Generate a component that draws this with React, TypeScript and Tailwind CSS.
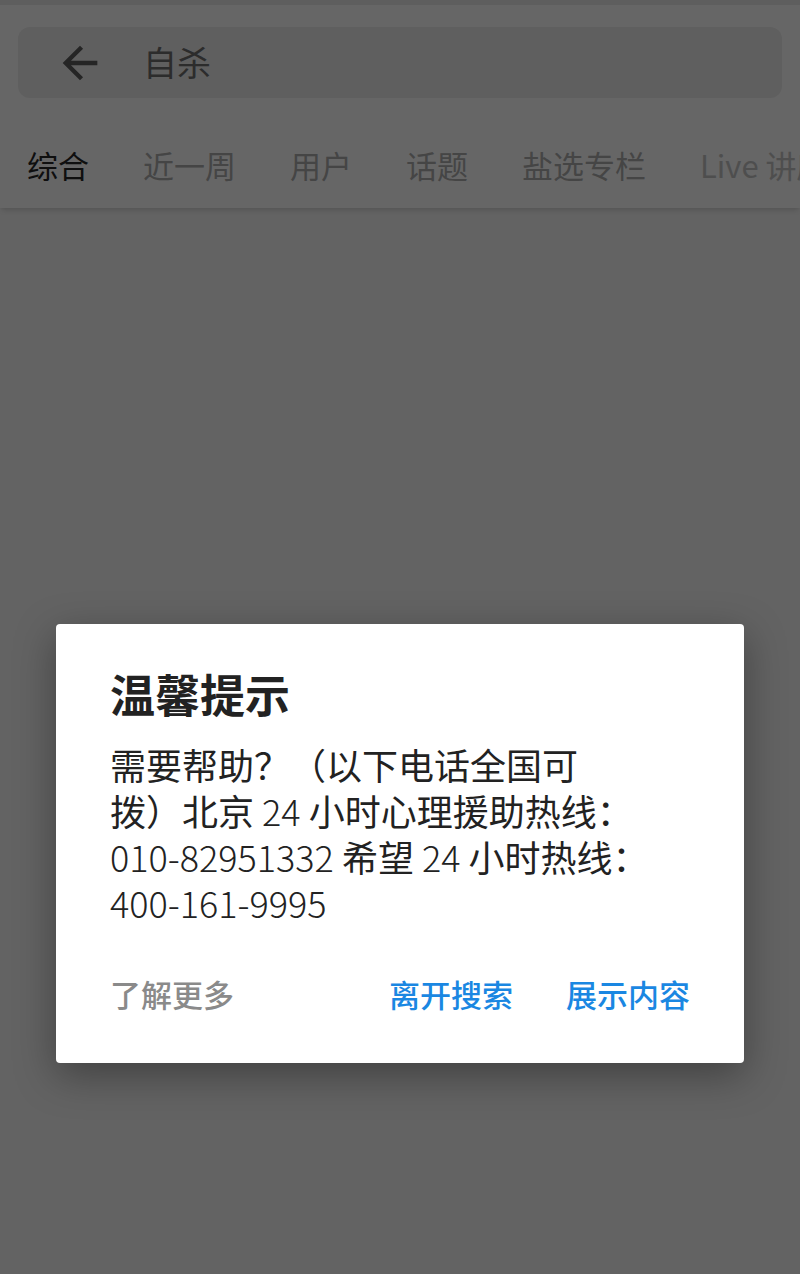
import React from "react"

const tabs = [
  { label: "综合", active: true },
  { label: "近一周" },
  { label: "用户" },
  { label: "话题" },
  { label: "盐选专栏" },
  { label: "Live 讲座" },
]

const font = "font-['Noto_Sans_CJK_SC','Noto_Sans',sans-serif]"

function BackArrow() {
  return (
    <svg viewBox="0 0 24 24" className="w-[52px] h-[52px] shrink-0 fill-[#5c5c5c]">
      <path d="M20 11H7.83l5.59-5.59L12 4l-8 8 8 8 1.41-1.41L7.83 13H20v-2z" />
    </svg>
  )
}

export default function App() {
  return (
    <div className={`relative w-[800px] h-[1274px] overflow-hidden bg-[#f8f8f8] ${font}`}>
      {/* Page under the dialog */}
      <div className="h-[5px] bg-[#ebebeb]" />
      <header className="bg-white shadow-md relative z-10">
        <div className="pt-[22px] px-[18px]">
          <div className="h-[71px] rounded-[12px] bg-[#ededed] flex items-center pl-[36px]">
            <BackArrow />
            <span className="ml-[37px] -mt-[2px] text-[34px] leading-none text-[#6e6e6e]">自杀</span>
          </div>
        </div>
        <nav className="mt-[20px] h-[90px] pt-[2px] flex items-center whitespace-nowrap overflow-hidden">
          {tabs.map((t) => (
            <div
              key={t.label}
              className={`px-[27px] text-[31px] leading-none ${t.active ? "text-[#262626]" : t.label.startsWith("Live") ? "text-[#c4c4c4]" : "text-[#adadad]"}`}
            >
              {t.label}
            </div>
          ))}
        </nav>
      </header>

      {/* Dim overlay */}
      <div className="absolute inset-0 bg-black/60 z-20" />

      {/* Dialog */}
      <div className="absolute z-30 left-[56px] top-[624px] w-[688px] bg-white rounded-[4px] shadow-[0_12px_40px_rgba(0,0,0,0.35)] px-[54px] pt-[44px] pb-[49px]">
        <h2 className="text-[45px] leading-[52px] font-bold text-[#222]">温馨提示</h2>
        <div className="mt-[21px] text-[36px] leading-[46px] text-[#222]">
          <p>需要帮助？（以下电话全国可</p>
          <p>
            拨）北京 <span className="font-light">24</span> 小时心理援助热线：
          </p>
          <p>
            <span className="font-light">010-82951332</span> 希望 <span className="font-light">24</span> 小时热线：
          </p>
          <p className="font-light">400-161-9995</p>
        </div>
        <div className="mt-[49px] flex items-center text-[31px] leading-[40px] font-medium">
          <button className="text-[#8a8a8a]">了解更多</button>
          <div className="flex-1" />
          <button className="text-[#1a87e2]">离开搜索</button>
          <button className="ml-[53px] text-[#1a87e2]">展示内容</button>
        </div>
      </div>
    </div>
  )
}
